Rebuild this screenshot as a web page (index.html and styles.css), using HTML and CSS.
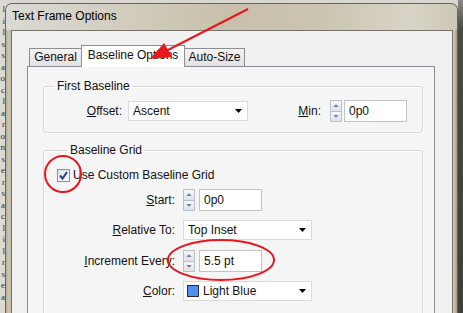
FILE: index.html
```html
<!DOCTYPE html>
<html lang="en">
<head>
    <meta charset="UTF-8">
    <meta name="viewport" content="width=device-width, initial-scale=1.0">
    <title>Text Frame Options</title>
    <link rel="stylesheet" href="styles.css">
</head>
<body>

<div class="desk">
    <!-- document showing behind the dialog -->
    <div class="doc">
        <span>l</span><span>i</span><span>l</span><span>s</span><span>s</span><span>a</span>
        <span>o</span><span>c</span><span>l</span><span>a</span><span>r</span><span>o</span>
        <span>n</span><span>s</span><span>e</span><span>r</span><span>s</span><span>a</span>
        <span>c</span><span>l</span><span>i</span><span>l</span><span>r</span><span>s</span>
        <span>e</span><span>a</span>
    </div>

    <div class="window">
        <div class="titlebar">Text Frame Options</div>

        <div class="client">
            <div class="tabs">
                <div class="tab tab-general">General</div>
                <div class="tab tab-baseline active">Baseline Options</div>
                <div class="tab tab-autosize">Auto-Size</div>
            </div>

            <div class="panel">
                <fieldset class="group group-first">
                    <legend>First Baseline</legend>
                    <div class="row">
                        <span class="lbl lbl-offset"><u>O</u>ffset:</span>
                        <div class="select select-offset">Ascent<span class="caret"></span></div>
                        <div class="min">
                            <span class="lbl"><u>M</u>in:</span>
                            <div class="spin"><span class="up"></span><span class="down"></span></div>
                            <div class="field">0p0</div>
                        </div>
                    </div>
                </fieldset>

                <fieldset class="group group-grid">
                    <legend>Baseline Grid</legend>
                    <div class="check-row">
                        <span class="checkbox">
                            <svg width="11" height="11" viewBox="0 0 11 11"><path d="M2 5.5 L4.5 8.5 L9 2" fill="none" stroke="#2d3f78" stroke-width="2"/></svg>
                        </span>
                        <span>Use Custom Baseline Grid</span>
                    </div>

                    <div class="row row-start">
                        <span class="lbl lbl-grid"><u>S</u>tart:</span>
                        <div class="spin"><span class="up"></span><span class="down"></span></div>
                        <div class="field">0p0</div>
                    </div>

                    <div class="row row-relative">
                        <span class="lbl lbl-grid"><u>R</u>elative To:</span>
                        <div class="select select-wide">Top Inset<span class="caret"></span></div>
                    </div>

                    <div class="row row-increment">
                        <span class="lbl lbl-grid"><u>I</u>ncrement Every:</span>
                        <div class="spin"><span class="up"></span><span class="down"></span></div>
                        <div class="field">5.5 pt</div>
                    </div>

                    <div class="row row-color">
                        <span class="lbl lbl-grid"><u>C</u>olor:</span>
                        <div class="select select-wide"><span class="swatch"></span>Light Blue<span class="caret"></span></div>
                    </div>
                </fieldset>
            </div>
        </div>
    </div>

    <div class="shade"></div>
</div>

<!-- red annotations drawn over the screenshot -->
<svg class="marks" width="463" height="313" viewBox="0 0 463 313">
    <g fill="none" stroke="#e8161e" stroke-width="2">
        <line x1="248" y1="9" x2="166" y2="51"/>
        <ellipse cx="63" cy="174" rx="18" ry="18"/>
        <ellipse cx="221" cy="260" rx="53" ry="20"/>
    </g>
    <polygon fill="#e8161e" points="150,59 172,57 164,43"/>
</svg>

</body>
</html>
```

FILE: styles.css
```css
* {
    box-sizing: border-box;
}
body {
    margin: 0;
    width: 463px;
    height: 313px;
    overflow: hidden;
    position: relative;
    font-family: "Liberation Sans", Arial, sans-serif;
    font-size: 12px;
    color: #111;
    background: #d9d7d0;
}
.desk {
    display: flex;
    height: 313px;
}
.doc {
    width: 5px;
    flex: none;
    display: flex;
    flex-direction: column;
    align-items: flex-end;
    padding-top: 4px;
    font-family: "Liberation Serif", serif;
    font-size: 9px;
    line-height: 11.5px;
    color: #2a2a2a;
    background: #dcdad3;
}
.window {
    width: 453px;
    flex: none;
    margin-top: 3px;
    padding: 0 4px 0 5px;
    border: 1px solid #67635a;
    border-bottom: none;
    border-radius: 7px 7px 0 0;
    background: linear-gradient(to right, #b7af99 0, #cdc6b2 3px, #b4ab94 6px, #c9c2ae 40%, #c1b9a3 70%, #b9b09a calc(100% - 5px), #d0c9b6 calc(100% - 3px), #9f9783 100%);
}
.titlebar {
    height: 26px;
    line-height: 24px;
    margin: 0 -4px 0 -5px;
    padding-left: 6px;
    border-radius: 6px 6px 0 0;
    background: linear-gradient(to right, #dad9d4 0%, #d2cdbf 25%, #c8c0aa 50%, #cbc4b1 70%, #d8d4c7 90%, #cdc7b6 100%);
    color: #000;
}
.client {
    height: 283px;
    padding: 14px 0 0 15px;
    border: 1px solid #77746b;
    border-bottom: none;
    background: #f0f0f0;
}
.tabs {
    display: flex;
    align-items: flex-end;
    height: 21px;
    margin-left: 2px;
}
.tab {
    height: 18px;
    line-height: 17px;
    text-align: center;
    border: 1px solid #8c8e94;
    border-bottom: none;
    background: linear-gradient(#f3f3f3, #e2e2e2);
}
.tab-general {
    width: 52px;
    border-right: none;
}
.tab-baseline {
    width: 104px;
}
.tab-autosize {
    width: 60px;
    border-left: none;
}
.tab.active {
    position: relative;
    z-index: 1;
    height: 22px;
    margin-bottom: -1px;
    line-height: 19px;
    background: #fff;
}
.panel {
    width: 408px;
    height: 247px;
    overflow: hidden;
    padding: 12px 11px 0 15px;
    border: 1px solid #8c8e94;
    border-bottom: none;
    background: #f5f5f5;
}
.group {
    margin: 0;
    min-width: 0;
    border: 1px solid #d6d6d6;
    border-radius: 3px;
    box-shadow: inset 1px 1px 0 #fff, 1px 1px 0 #fff;
}
.group legend {
    margin-left: 10px;
    padding: 0 3px;
    line-height: 14px;
}
.group-first {
    padding: 7px 15px 10px 0;
}
.group-grid {
    margin-top: 10px;
    padding: 10px 0 30px 13px;
}
.row {
    display: flex;
    align-items: center;
    height: 22px;
}
.lbl {
    flex: none;
    text-align: right;
}
.lbl-offset {
    width: 78px;
}
.lbl-grid {
    width: 118px;
    margin-right: 8px;
}
.select {
    display: flex;
    align-items: center;
    height: 20px;
    padding-left: 4px;
    border: 1px solid #dadada;
    background: #fff;
}
.select-offset {
    width: 120px;
    margin-left: 6px;
}
.select-wide {
    width: 129px;
}
.caret {
    margin-left: auto;
    margin-right: 5px;
    width: 7px;
    height: 4px;
    background: #000;
    clip-path: polygon(0 0, 100% 0, 50% 100%);
}
.swatch {
    width: 12px;
    height: 12px;
    margin: 0 4px 0 -1px;
    border: 1px solid #2b2b2b;
    background: #4e8ff0;
}
.min {
    display: flex;
    align-items: center;
    margin-left: auto;
}
.spin {
    display: flex;
    flex-direction: column;
    width: 12px;
    height: 22px;
    margin-right: 4px;
}
.min .spin {
    margin-left: 9px;
    margin-right: 2px;
}
.spin span {
    flex: 1;
    display: flex;
    align-items: center;
    justify-content: center;
    border: 1px solid #b9c0ca;
    background: linear-gradient(#f5f7fa, #dde2e9);
}
.spin .down {
    border-top: none;
}
.spin span::after {
    content: "";
    width: 6px;
    height: 3px;
    background: #75839a;
}
.spin .up::after {
    clip-path: polygon(50% 0, 100% 100%, 0 100%);
}
.spin .down::after {
    clip-path: polygon(0 0, 100% 0, 50% 100%);
}
.field {
    width: 63px;
    height: 22px;
    line-height: 20px;
    padding-left: 4px;
    border: 1px solid #c3c3c3;
    background: #fff;
}
.check-row {
    display: flex;
    align-items: center;
    height: 16px;
}
.checkbox {
    display: flex;
    align-items: center;
    justify-content: center;
    width: 13px;
    height: 13px;
    margin-right: 3px;
    border: 1px solid #8e8f8f;
    background: linear-gradient(135deg, #dfe3ea, #f7f8fa);
}
.row-start {
    margin-top: 6px;
}
.row-relative {
    margin-top: 8px;
}
.row-increment {
    margin-top: 9px;
}
.row-color {
    margin-top: 8px;
}
.shade {
    flex: 1;
    background: linear-gradient(#8a8882 0, #4a4944 30px, #3f3e3a 100%);
}
.marks {
    position: absolute;
    z-index: 2;
    left: 0;
    top: 0;
    pointer-events: none;
}
```
